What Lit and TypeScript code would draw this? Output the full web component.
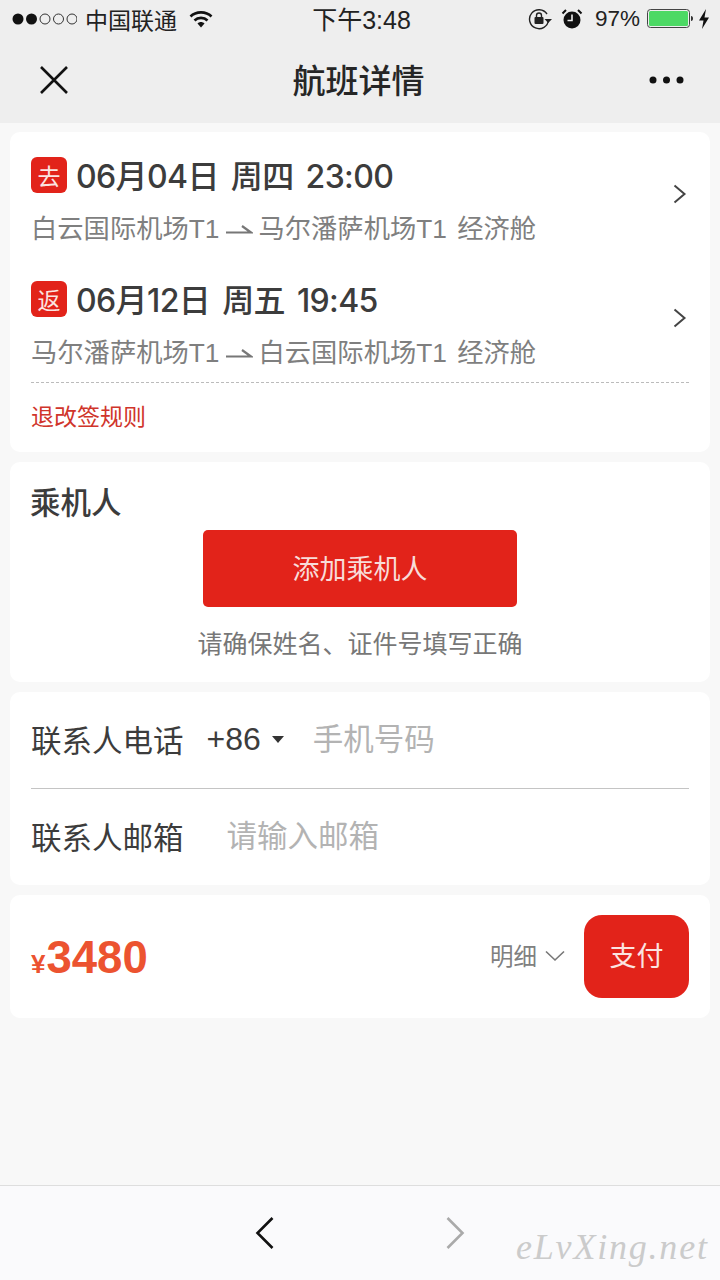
import { LitElement, html, css } from "lit";
import { customElement } from "lit/decorators.js";

const arrow = html`<svg class="arrow" width="28" height="12" viewBox="0 0 28 12">
  <path d="M1 8.500H26L17 2" fill="none" stroke="#777" stroke-width="2.200" />
</svg>`;

const chevron = html`<svg class="chev" width="16" height="22" viewBox="0 0 16 22">
  <path d="M2.500 2.500L12.500 11L2.500 19.500" fill="none" stroke="#444" stroke-width="2" />
</svg>`;

@customElement("app-root")
export class AppRoot extends LitElement {
  static styles = css`
    :host {
      display: flex;
      flex-direction: column;
      height: 1280px;
      background: #f8f8f8;
      color: #333;
      font-family: "Liberation Sans", "Noto Sans CJK SC", sans-serif;
    }
    .head {
      height: 123px;
      background: #eeeeee;
      flex: none;
    }
    .status {
      height: 38px;
      padding: 0 10px 2px 12px;
      display: flex;
      align-items: center;
      font-size: 23px;
      color: #222;
    }
    .status-left {
      flex: 1;
      display: flex;
      align-items: center;
      gap: 8px;
    }
    .status-right {
      flex: 1;
      display: flex;
      align-items: center;
      justify-content: flex-end;
    }
    .time {
      font-size: 25px;
      width: 110px;
      margin: -2px 0 0 1px;
      text-align: center;
      white-space: nowrap;
    }
    .pct {
      font-size: 22.500px;
      margin: 0 7px 0 12px;
    }
    .batt {
      margin-right: 2px;
    }
    .nav {
      height: 83px;
      display: flex;
      align-items: center;
      justify-content: space-between;
      padding: 0 36px 0 38px;
    }
    .title {
      font-size: 33px;
      font-weight: 500;
      color: #262626;
      margin: -6px 0 0 -2px;
    }
    .main {
      flex: 1;
      display: flex;
      flex-direction: column;
      gap: 10px;
      padding: 9px 10px 0;
    }
    .card {
      background: #fff;
      border-radius: 10px;
      padding: 0 21px;
    }
    .flights {
      height: 320px;
      box-sizing: border-box;
      padding-top: 25px;
    }
    .flight {
      height: 124px;
      display: grid;
      grid-template-columns: 1fr 20px;
      align-items: start;
    }
    .flight .chev {
      margin: 26px 0 0 3px;
      justify-self: start;
    }
    .when {
      height: 36px;
      display: flex;
      align-items: center;
      gap: 9px;
      font-family: "Inter", "Noto Sans CJK SC", sans-serif;
      font-size: 32px;
      font-weight: 550;
      letter-spacing: -0.600px;
      word-spacing: 4px;
      color: #3c3c3c;
      white-space: pre;
    }
    .when-text {
      margin-top: -2px;
    }
    .tag {
      width: 36px;
      height: 36px;
      border-radius: 6px;
      background: #e2231a;
      color: #fbe4e1;
      font-family: "Noto Sans CJK SC", sans-serif;
      font-size: 23px;
      font-weight: 400;
      letter-spacing: 0;
      display: flex;
      align-items: center;
      justify-content: center;
    }
    .route {
      margin-top: 18px;
      height: 36px;
      line-height: 36px;
      font-size: 26.300px;
      word-spacing: 3px;
      color: #7f7f7f;
      white-space: pre;
      display: flex;
      align-items: center;
    }
    .arrow {
      margin: 2px 5px 0 6px;
    }
    .flight-list {
      height: 225px;
      border-bottom: 1px dashed #bbb;
    }
    .rules {
      margin-top: 20px;
      font-size: 23px;
      line-height: 28px;
      color: #d0352b;
    }
    .passenger {
      height: 220px;
      box-sizing: border-box;
      padding-top: 23px;
      display: flex;
      flex-direction: column;
      align-items: center;
    }
    .passenger h2 {
      align-self: flex-start;
      margin: 0 0 0 -1px;
      font-size: 30.500px;
      line-height: 36px;
      font-weight: 500;
      color: #3c3c3c;
    }
    .add {
      margin-top: 9px;
      width: 314px;
      height: 77px;
      padding-bottom: 2px;
      box-sizing: border-box;
      border-radius: 5px;
      background: #e2231a;
      color: #f8dcd9;
      font-size: 27px;
      display: flex;
      align-items: center;
      justify-content: center;
    }
    .hint {
      margin-top: 19px;
      font-size: 25px;
      line-height: 36px;
      color: #777;
    }
    .contact {
      height: 193px;
      box-sizing: border-box;
    }
    .field {
      height: 96px;
      padding-bottom: 2px;
      box-sizing: border-box;
      display: flex;
      align-items: center;
      font-size: 30.500px;
      color: #3c3c3c;
      white-space: nowrap;
    }
    .field + .field {
      border-top: 1px solid #c4c4c4;
    }
    .field .code {
      margin-left: 23px;
      font-size: 32px;
    }
    .caret {
      width: 0;
      height: 0;
      margin: 0 29px 0 11px;
      border: 6px solid transparent;
      border-top: 7px solid #333;
      border-bottom: 0;
    }
    .ph {
      font-size: 30.500px;
      color: #b3b3b3;
      margin-top: -4px;
    }
    .mail {
      margin-left: 43px;
    }
    .pay {
      height: 123px;
      display: flex;
      align-items: center;
    }
    .price {
      flex: 1;
      margin-top: 2px;
      color: #ec5330;
      font-size: 45.500px;
      font-weight: 700;
      display: flex;
      align-items: baseline;
    }
    .price small {
      font-size: 26px;
      margin-right: 1px;
    }
    .detail {
      font-size: 23.500px;
      color: #808080;
      margin: -4px 8px 0 0;
    }
    .btn {
      margin-left: 19px;
      width: 105px;
      height: 83px;
      padding-bottom: 4px;
      box-sizing: border-box;
      border-radius: 18px;
      background: #e2231a;
      color: #fbe4e1;
      font-size: 27px;
      display: flex;
      align-items: center;
      justify-content: center;
    }
    .bottom {
      flex: none;
      height: 94px;
      background: #fafafc;
      border-top: 1px solid #dedede;
      display: flex;
      align-items: center;
      padding-left: 255px;
      position: relative;
    }
    .bottom .next {
      margin-left: 170px;
    }
    .mark {
      position: absolute;
      left: 516px;
      top: 40px;
      font-family: "Liberation Serif", serif;
      font-style: italic;
      font-size: 36px;
      letter-spacing: 1.800px;
      color: #cbcbcb;
      white-space: nowrap;
    }
  `;

  flight(tag: string, when: string, from: string, to: string) {
    return html`<div class="flight">
      <div>
        <div class="when"><span class="tag">${tag}</span><span class="when-text">${when}</span></div>
        <div class="route">${from}${arrow}${to} 经济舱</div>
      </div>
      ${chevron}
    </div>`;
  }

  render() {
    return html`
      <div class="head">
        <div class="status">
          <div class="status-left">
            <svg width="65" height="14" viewBox="0 0 65 14">
              <circle cx="6" cy="7" r="5.500" fill="#111" />
              <circle cx="19.500" cy="7" r="5.500" fill="#111" />
              <g fill="none" stroke="#333" stroke-width="1">
                <circle cx="33" cy="7" r="5" />
                <circle cx="46.500" cy="7" r="5" />
                <circle cx="60" cy="7" r="5" />
              </g>
            </svg>
            <span>中国联通</span>
            <svg width="24" height="18" viewBox="0 0 24 18" style="margin-left:4px">
              <g fill="none" stroke="#111" stroke-width="2.600">
                <path d="M1.500 6.500C7 1 17 1 22.500 6.500" />
                <path d="M5.500 10.500C9 7 15 7 18.500 10.500" />
              </g>
              <path d="M8.500 13.500C10.500 11.500 13.500 11.500 15.500 13.500L12 17.500Z" fill="#111" />
            </svg>
          </div>
          <div class="time">下午3:48</div>
          <div class="status-right">
            <svg width="24" height="22" viewBox="0 0 24 22">
              <path d="M20.500 12A9.500 9.500 0 1 1 19 6" fill="none" stroke="#222" stroke-width="1.400" />
              <path d="M16.500 11H24L20.200 15Z" fill="#222" />
              <rect x="6.500" y="9" width="9" height="7" rx="1" fill="#222" />
              <path d="M8.500 9V7.500a2.500 2.500 0 0 1 5 0V9" fill="none" stroke="#222" stroke-width="1.400" />
            </svg>
            <svg width="22" height="22" viewBox="0 0 22 22" style="margin-left:9px">
              <circle cx="11" cy="12" r="8.500" fill="#111" />
              <path d="M11 6.500V12.500H6.500" fill="none" stroke="#eee" stroke-width="1.600" />
              <path d="M1.500 5.500L5 2M20.500 5.500L17 2" stroke="#111" stroke-width="2" />
            </svg>
            <span class="pct">97%</span>
            <svg class="batt" width="46" height="20" viewBox="0 0 46 20">
              <rect x="0.500" y="0.500" width="42" height="18" rx="3" fill="none" stroke="#444" />
              <rect x="2" y="2" width="39" height="15" rx="1.500" fill="#4cd964" />
              <path d="M44 7c1.500 0 2 1 2 2.500S45.500 12 44 12Z" fill="#333" />
            </svg>
            <svg width="12" height="20" viewBox="0 0 12 20" style="margin:0 0 0 3px">
              <path d="M8 0L1 11.500H5.500L4 20L11 8.500H6.500Z" fill="#111" />
            </svg>
          </div>
        </div>
        <div class="nav">
          <svg width="32" height="32" viewBox="0 0 32 32" style="margin-top:-4px">
            <path d="M3 3L29 29M29 3L3 29" stroke="#111" stroke-width="2.600" fill="none" />
          </svg>
          <div class="title">航班详情</div>
          <svg width="35" height="8" viewBox="0 0 35 8" style="margin-top:-4px">
            <circle cx="4" cy="4" r="3.500" fill="#111" />
            <circle cx="17.500" cy="4" r="3.500" fill="#111" />
            <circle cx="31" cy="4" r="3.500" fill="#111" />
          </svg>
        </div>
      </div>

      <div class="main">
        <section class="card flights">
          <div class="flight-list">
            ${this.flight("去", "06月04日 周四 23:00", "白云国际机场T1", "马尔潘萨机场T1")}
            ${this.flight("返", "06月12日 周五 19:45", "马尔潘萨机场T1", "白云国际机场T1")}
          </div>
          <div class="rules">退改签规则</div>
        </section>

        <section class="card passenger">
          <h2>乘机人</h2>
          <div class="add">添加乘机人</div>
          <div class="hint">请确保姓名、证件号填写正确</div>
        </section>

        <section class="card contact">
          <div class="field">
            <span>联系人电话</span>
            <span class="code">+86</span>
            <span class="caret"></span>
            <span class="ph">手机号码</span>
          </div>
          <div class="field">
            <span>联系人邮箱</span>
            <span class="ph mail">请输入邮箱</span>
          </div>
        </section>

        <section class="card pay">
          <div class="price"><small>¥</small>3480</div>
          <span class="detail">明细</span>
          <svg width="20" height="12" viewBox="0 0 20 12" style="margin-top:-2px">
            <path d="M1 1.500L10 10L19 1.500" fill="none" stroke="#777" stroke-width="1.600" />
          </svg>
          <div class="btn">支付</div>
        </section>
      </div>

      <div class="bottom">
        <svg width="20" height="34" viewBox="0 0 20 34">
          <path d="M17.500 2L2.500 17L17.500 32" fill="none" stroke="#111" stroke-width="2.600" />
        </svg>
        <svg class="next" width="20" height="34" viewBox="0 0 20 34">
          <path d="M2.500 2L17.500 17L2.500 32" fill="none" stroke="#aaa" stroke-width="2.600" />
        </svg>
        <span class="mark">eLvXing.net</span>
      </div>
    `;
  }
}
